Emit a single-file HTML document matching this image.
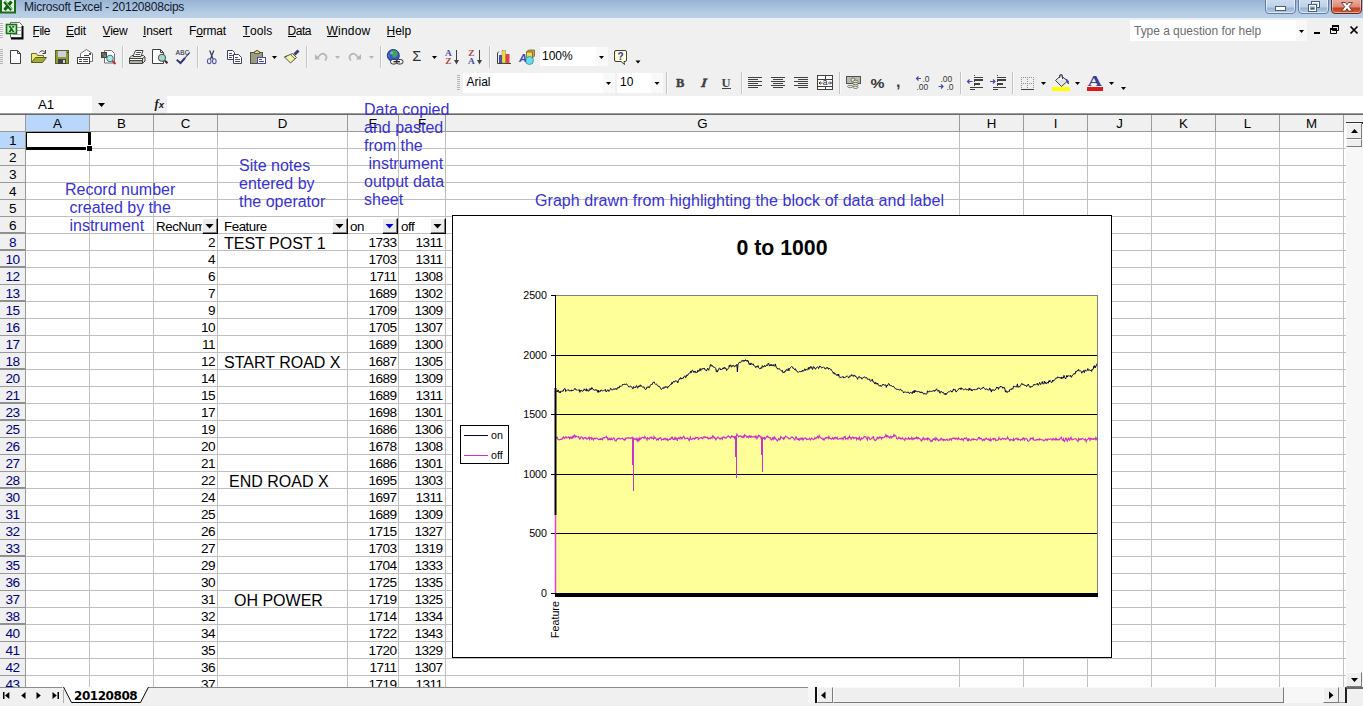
<!DOCTYPE html>
<html lang="en"><head><meta charset="utf-8"><title>Microsoft Excel - 20120808cips</title>
<style>
html,body{margin:0;padding:0}
body{width:1363px;height:706px;overflow:hidden;background:#f0f0f0;position:relative;font-family:"Liberation Sans",sans-serif;color:#000}
div,span,svg{position:absolute;box-sizing:border-box}
.t{white-space:pre;line-height:1}

#title{left:0;top:0;width:1363px;height:22px;background:linear-gradient(#99b3d3 0,#a9c2de 8px,#b5cde6 13px,#bccfe0 17.500px,#e8f1f9 17.700px,#edf1f5 20px,#f0f0f0 22px)}
.menu{font-size:12px;top:25px;color:#000}
.menu u{text-decoration:none;display:inline-block;position:static;height:11px;line-height:12px;border-bottom:1px solid #000}
.hd{background:#f0f0f0;font-size:13.3px;text-align:center;line-height:17px}
.ch{top:115px;height:16px;border-right:1px solid #9a9a9a;}
.rh{left:0;width:26px;letter-spacing:-.5px;height:17px;border-bottom:1px solid #9a9a9a;line-height:18px;font-size:13.6px;text-align:center}
.rb{color:#00007f}
.num{font-size:13.6px;letter-spacing:-.55px;text-align:right;line-height:18px;height:17px}
.ft{font-size:16px;line-height:19px;height:17px;white-space:pre}
.note{color:#3832d2;font-size:16px;line-height:18px;white-space:pre}
.vb{background:#efefef;border:1px solid;border-color:#fbfbfb #7c7c7c #7c7c7c #fbfbfb}
.fb{background:#ececec;border:1px solid;border-color:#fff #000 #000 #fff;box-shadow:inset -1px -1px 0 #808080}
</style></head><body>
<div id="title"></div>
<svg style="left:0;top:0" width="16" height="14" viewBox="0 0 16 14"><rect x="0" y="0" width="16" height="13.500" fill="#1b6b1b"/><rect x="2" y="0" width="12" height="11.500" fill="#e6f7e6"/><path d="M4.500 1.500 L11.500 10 M11.500 1.500 L4.500 10" stroke="#0d640d" stroke-width="3.200" fill="none"/><path d="M4.800 .500 L12.300 9.800" stroke="#e6f7e6" stroke-width=".800" fill="none"/></svg>
<div class="t" style="left:24px;top:1px;font-size:12px;letter-spacing:-.22px;color:#10182c">Microsoft Excel - 20120808cips</div>
<div style="left:1265px;top:-2px;width:31px;height:16px;border:1px solid #5f7ea8;border-radius:0 0 4px 4px;background:linear-gradient(#cfddf0 0,#bed1e9 8px,#9ab4d5 9px,#a8c0de 12px,#bfd2ea 15px);box-shadow:inset 0 0 0 1px rgba(255,255,255,.55)"></div>
<div style="left:1298px;top:-2px;width:31px;height:16px;border:1px solid #5f7ea8;border-radius:0 0 4px 4px;background:linear-gradient(#cfddf0 0,#bed1e9 8px,#9ab4d5 9px,#a8c0de 12px,#bfd2ea 15px);box-shadow:inset 0 0 0 1px rgba(255,255,255,.55)"></div>
<div style="left:1331px;top:-2px;width:31px;height:16px;border:1px solid #6b2a22;border-radius:0 0 4px 4px;background:linear-gradient(#eab3a6 0,#dc8875 8px,#c23f24 9px,#cd5030 12px,#de8458 15px);box-shadow:inset 0 0 0 1px rgba(255,255,255,.4)"></div>
<svg style="left:1265px;top:0" width="98" height="15" viewBox="0 0 98 15">
<rect x="10.5" y="6.5" width="10" height="4" fill="#fff" stroke="#4a5d78" stroke-width="1"/>
<rect x="46.500" y="1.500" width="8" height="6" fill="none" stroke="#4a5d78" stroke-width="1"/><rect x="47.5" y="2.500" width="6" height="4" fill="none" stroke="#fff" stroke-width="1"/>
<rect x="43.500" y="4.500" width="8" height="7" fill="#b6cbe6" stroke="#4a5d78" stroke-width="1"/><rect x="44.5" y="5.500" width="6" height="5" fill="none" stroke="#fff" stroke-width="1"/><rect x="45.5" y="7.5" width="4" height="2" fill="#4a5d78" stroke="none"/>
<path d="M76.500 2.500 L80.500 2.500 L82 4.800 L83.500 2.500 L87.500 2.500 L84.200 6.700 L87.500 11 L83.500 11 L82 8.700 L80.500 11 L76.500 11 L79.800 6.700 Z" fill="#fff" stroke="#6a3028" stroke-width=".9"/>
</svg>
<div style="left:0;top:23px;width:3px;height:15px;background:repeating-linear-gradient(#b8b8b8 0,#b8b8b8 1px,#f8f8f8 1px,#f8f8f8 2px)"></div>
<svg style="left:5px;top:21px" width="19" height="19" viewBox="0 0 19 19">
<path d="M5.500 1.500 L14.500 1.500 L17.500 4.500 L17.500 16.500 L5.500 16.500 Z" fill="#fff" stroke="#707070" stroke-width="1"/><path d="M12 6.500 h4 M12 9.500 h4 M8 13.500 h8" stroke="#b0b0b0" fill="none"/>
<path d="M17.500 5 L17.500 17.500 L6 17.500" fill="none" stroke="#000" stroke-width="2"/>
<rect x="1.5" y="3.500" width="10" height="9" fill="#c4ecc4" stroke="#176f17" stroke-width="1.6"/>
<path d="M3.500 5 L5.500 5 L9.500 11 L7.500 11 Z M7.600 5 L9.500 5 L8 7.200 L7 5.800 Z M3.500 11 L5.800 7.600 L6.800 9 L5.500 11 Z" fill="#0f6a0f"/>
</svg>
<div class="t menu" style="left:32.5px;letter-spacing:-0.45px"><u>F</u>ile</div>
<div class="t menu" style="left:66px;letter-spacing:-0.17px"><u>E</u>dit</div>
<div class="t menu" style="left:102.5px;letter-spacing:-0.3px"><u>V</u>iew</div>
<div class="t menu" style="left:143px;letter-spacing:-0.17px"><u>I</u>nsert</div>
<div class="t menu" style="left:189px;letter-spacing:-0.17px">F<u>o</u>rmat</div>
<div class="t menu" style="left:242.5px;letter-spacing:0.1px"><u>T</u>ools</div>
<div class="t menu" style="left:287.5px;letter-spacing:-0.46px"><u>D</u>ata</div>
<div class="t menu" style="left:326.5px;letter-spacing:0.2px"><u>W</u>indow</div>
<div class="t menu" style="left:386.5px;letter-spacing:0px"><u>H</u>elp</div>
<div style="left:1130px;top:20px;width:166px;height:21px;background:#fff"></div><div style="left:1296px;top:20px;width:11px;height:21px;background:#f8f8f8"></div>
<div class="t" style="left:1134px;top:25px;font-size:12px;letter-spacing:-.04px;color:#6d6d6d">Type a question for help</div>
<svg style="left:1296px;top:20px" width="67" height="21" viewBox="0 0 67 21"><path d="M3 10 L8 10 L5.500 13 Z" fill="#000"/><rect x="18" y="12" width="6" height="2" fill="#000"/><path d="M36.500 5.500 h6 v5 h-6 z M34.500 8.500 h6 v5 h-6 z" fill="#f0f0f0" stroke="#000" stroke-width="1"/><path d="M36 6 h7 M34 9 h7" stroke="#000" stroke-width="2"/><path d="M54.500 6.500 L61.500 13.500 M61.500 6.500 L54.500 13.500" stroke="#000" stroke-width="1.700"/></svg>
<svg style="left:0;top:44px" width="660" height="26" viewBox="0 44 660 26" font-family="Liberation Sans, sans-serif">
<rect x="0" y="49" width="3" height="1" fill="#b4b4b4"/><rect x="0" y="51" width="3" height="1" fill="#b4b4b4"/><rect x="0" y="53" width="3" height="1" fill="#b4b4b4"/><rect x="0" y="55" width="3" height="1" fill="#b4b4b4"/><rect x="0" y="57" width="3" height="1" fill="#b4b4b4"/><rect x="0" y="59" width="3" height="1" fill="#b4b4b4"/><rect x="0" y="61" width="3" height="1" fill="#b4b4b4"/><rect x="0" y="63" width="3" height="1" fill="#b4b4b4"/><path d="M10.5 50.5 H17.5 L20.5 53.5 V63.5 H10.5 Z" fill="#fff" stroke="#404040"/><path d="M17.5 50.5 V53.5 H20.5" fill="none" stroke="#404040"/>
<path d="M31.5 62.5 V53.5 H36.5 L37.5 55.5 H43.5 V57.5" fill="#f3ea86" stroke="#6b6b2a"/><path d="M31.5 62.5 L35.5 57.5 H46.5 L42.5 62.5 Z" fill="#a3ab3c" stroke="#5a5f20"/><path d="M39.5 52.5 Q42 49 45 52.5 M45.5 50 V53.5 H42.5" fill="none" stroke="#404040"/>
<rect x="55.5" y="50.5" width="13" height="13" fill="#8f9a3c" stroke="#5a6420"/><rect x="58" y="51" width="8" height="6" fill="#cfcfe0"/><rect x="58" y="59" width="8" height="5" fill="#404040"/><rect x="63" y="60" width="2" height="3" fill="#d8d8d8"/><rect x="67" y="52" width="1" height="1" fill="#303030"/>
<path d="M80.5 57 V53.5 L86.5 49.5 L92.5 53.5 V61.5 H89.5" fill="#fff" stroke="#707070"/><path d="M84 55.5 h5" stroke="#404040" fill="none"/><rect x="89" y="53" width="2" height="2" fill="#505050"/><rect x="77.5" y="57.5" width="12" height="6" fill="#fff" stroke="#404040"/><path d="M79 59.5 h3 M79 61.500 h3 M83 59.5 h5 M83 61.5 h5" stroke="#505050" fill="none"/>
<path d="M104.5 50.5 h7 l3 3 v9.5 h-10 z" fill="#fff" stroke="#707070"/><rect x="101.5" y="52.5" width="5" height="5" fill="#606060" stroke="#404040"/><rect x="102" y="53" width="2" height="2" fill="#c05050"/><rect x="104" y="55" width="2" height="2" fill="#50a050"/><circle cx="110" cy="58.5" r="3.300" fill="#a8e4e4" stroke="#407080"/><path d="M112.5 61 L115.5 64" stroke="#c03030" stroke-width="2" fill="none"/>
<rect x="122" y="46" width="1" height="22" fill="#c4c4c4"/><rect x="123" y="46" width="1" height="22" fill="#fafafa"/><path d="M129.500 58 L132 55.500 H143.500 L145 57 V61 L142.500 63.500 H129.500 Z" fill="#e6e6e0" stroke="#404040"/><path d="M133 56.500 L135.500 50.500 H143 L141 56.500 Z" fill="#fff" stroke="#404040"/><path d="M136.300 52.500 h4.700 M135.500 54.500 h4.700" stroke="#505050" fill="none"/><rect x="130" y="58.500" width="12" height="1.500" fill="#fff"/><rect x="130" y="61" width="12" height="2" fill="#aeaea6"/><path d="M129.500 58.500 H142.500 M130 60.500 H142.500 M142.500 58 V63.500 M142.500 58.500 L145 56.500" stroke="#404040" fill="none"/>
<path d="M152.500 49.500 h8 l3 3 v11 h-11 z" fill="#fff" stroke="#404040"/><path d="M160.500 49.500 v3 h3" fill="none" stroke="#404040"/><circle cx="162" cy="57.800" r="3.600" fill="#a4d6ce" stroke="#404848"/><path d="M165 60.800 L167.500 63.300" stroke="#303030" stroke-width="2.200" fill="none"/>
<text x="175.800" y="54.800" font-size="6.300" fill="#30304c" letter-spacing=".300" stroke="#30304c" stroke-width=".150">ABC</text><path d="M176.700 59.700 L180.500 63 L185 58" fill="none" stroke="#363678" stroke-width="2"/><path d="M184.500 58.500 L189.800 52.300" fill="none" stroke="#363678" stroke-width="1.100"/>
<rect x="197" y="46" width="1" height="22" fill="#c4c4c4"/><rect x="198" y="46" width="1" height="22" fill="#fafafa"/><path d="M209.700 50.500 L213 59 M213.800 50.500 L210.500 59" stroke="#404060" stroke-width="1.300" fill="none"/><ellipse cx="209.200" cy="61.200" rx="1.800" ry="2.400" fill="none" stroke="#5858a8" stroke-width="1.100"/><ellipse cx="214.300" cy="61.200" rx="1.800" ry="2.400" fill="none" stroke="#5858a8" stroke-width="1.100"/>
<path d="M227.500 50.500 h5 l2 2 v7 h-7 z" fill="#fff" stroke="#404060"/><path d="M229 53.500 h3 M229 55.500 h4 M229 57.500 h3" stroke="#505070" fill="none"/><path d="M233.500 54.500 h5 l3 3 v6 h-8 z" fill="#fff" stroke="#404060"/><path d="M235 57.500 h3 M235 59.500 h5 M235 61.500 h5" stroke="#505070" fill="none"/>
<rect x="250.500" y="52.500" width="12" height="11" fill="#9c9c84" stroke="#505040"/><path d="M254.500 53.500 v-2 h1.500 v-1 h2 v1 h1.500 v2 z" fill="#e4dc90" stroke="#606030"/><rect x="257.500" y="57.500" width="8" height="6" fill="#fff" stroke="#4a4aa0"/><path d="M259 59.500 h3 M259 61.500 h5" stroke="#4a4aa0" fill="none"/>
<path d="M272 56 h5 l-2.5 3 z" fill="#000"/><path d="M298.500 50.500 L294.500 54.500" stroke="#3c3c78" stroke-width="3" fill="none"/><path d="M292.500 53.500 L296.500 57.500 L290.500 63 L284.500 57 Z" fill="#f4f4a8" stroke="#505050"/><path d="M291 55 L295 59" stroke="#707070" fill="none"/><path d="M284.500 57 L287 56" stroke="#505050" fill="none"/>
<rect x="306" y="46" width="1" height="22" fill="#c4c4c4"/><rect x="307" y="46" width="1" height="22" fill="#fafafa"/><path d="M318 57.500 Q322 51 326 55.500 Q327.500 58 325 60.500" fill="none" stroke="#b4b4b4" stroke-width="1.600"/><path d="M315 54 L320 59.500 L315 59.500 Z" fill="#b4b4b4"/><path d="M335 56 h5 l-2.5 3 z" fill="#b4b4b4"/><path d="M358 57.500 Q354 51 350 55.500 Q348.500 58 351 60.500" fill="none" stroke="#b4b4b4" stroke-width="1.600"/><path d="M361 54 L356 59.500 L361 59.500 Z" fill="#b4b4b4"/><path d="M369 56 h5 l-2.5 3 z" fill="#b4b4b4"/>
<rect x="380" y="46" width="1" height="22" fill="#c4c4c4"/><rect x="381" y="46" width="1" height="22" fill="#fafafa"/><circle cx="393.300" cy="55.500" r="6" fill="#3456d4" stroke="#1f3694"/><path d="M390.500 51 Q394.500 49.500 397 51.500 Q398.500 54.500 396.500 56.500 Q393.500 58.500 392 56 Q394 53.500 390.500 51 Z" fill="#3fa84c"/><path d="M388 54 Q390 55 389.500 58 Q388 57 388 54 Z" fill="#3fa84c"/><circle cx="391.500" cy="53" r="1.600" fill="#a8c0f4" opacity=".700"/><rect x="390.500" y="59.500" width="6.500" height="4.500" rx="2.200" fill="#f4f4f4" stroke="#303030"/><rect x="396.500" y="59.500" width="6.500" height="4.500" rx="2.200" fill="#f4f4f4" stroke="#303030"/><path d="M393.500 61.700 h6.500" stroke="#303030" stroke-width="1.400" fill="none"/>
<text x="412.200" y="61.200" font-size="14.500" fill="#303030">Σ</text><path d="M432 56 h5 l-2.5 3 z" fill="#000"/><text x="445" y="55.900" font-size="8.800" textLength="6.800" lengthAdjust="spacingAndGlyphs" font-weight="bold" fill="#4a4aa8" font-family="Liberation Serif, serif">A</text><text x="445.300" y="63.800" font-size="8.800" textLength="6.300" lengthAdjust="spacingAndGlyphs" font-weight="bold" fill="#a84848" font-family="Liberation Serif, serif">Z</text><path d="M456.500 50 V62" stroke="#404040" fill="none"/><path d="M454 60 h5 l-2.500 4.500 z" fill="#404040"/><text x="468.300" y="55.900" font-size="8.800" textLength="6.300" lengthAdjust="spacingAndGlyphs" font-weight="bold" fill="#a84848" font-family="Liberation Serif, serif">Z</text><text x="468" y="63.800" font-size="8.800" textLength="6.800" lengthAdjust="spacingAndGlyphs" font-weight="bold" fill="#4a4aa8" font-family="Liberation Serif, serif">A</text><path d="M479.500 50 V62" stroke="#404040" fill="none"/><path d="M477 60 h5 l-2.500 4.500 z" fill="#404040"/>
<rect x="489" y="46" width="1" height="22" fill="#c4c4c4"/><rect x="490" y="46" width="1" height="22" fill="#fafafa"/><path d="M499 51.500 L497.500 53 V63.500 H511" fill="none" stroke="#404040"/><rect x="499" y="55" width="3" height="8" fill="#4450b8"/><rect x="502" y="50.500" width="3.500" height="12.500" fill="#f2e040" stroke="#8a8030" stroke-width=".500"/><rect x="505.500" y="54" width="4" height="9" fill="#d84848"/>
<path d="M526.500 52 l2 -2 h6 v6 l-2 2 z" fill="#c8a838" stroke="#605020" stroke-width=".700"/><rect x="526.500" y="52" width="6" height="6" fill="#f0d850" stroke="#605020" stroke-width=".700"/><circle cx="529.500" cy="60.500" r="4" fill="#68dcec" stroke="#2a8090" stroke-width=".700"/><text x="519" y="62" font-size="11" font-weight="bold" font-style="italic" fill="#3a48b0">A</text>
<rect x="540" y="47" width="56" height="19" fill="#fff"/><rect x="596" y="47" width="12" height="19" fill="#f9f9f9"/><text x="542" y="60" font-size="12" fill="#000">100%</text><path d="M599 56 h5 l-2.5 3 z" fill="#000"/><path d="M616 50.500 h9 q1.500 0 1.500 1.500 v8 q0 1.500 -1.500 1.500 h-1 l.500 3 l-3.500 -3 h-5 q-1.500 0 -1.500 -1.500 v-8 q0 -1.500 1.500 -1.500 z" fill="#ffffd8" stroke="#404040"/><text x="617.500" y="60" font-size="10" font-weight="bold" fill="#3434a0">?</text><path d="M635.500 60.500 h5 l-2.500 3 z" fill="#000"/>
</svg>
<svg style="left:456px;top:70px" width="680" height="26" viewBox="456 70 680 26" font-family="Liberation Sans, sans-serif">
<rect x="457" y="75" width="3" height="1" fill="#b4b4b4"/><rect x="457" y="77" width="3" height="1" fill="#b4b4b4"/><rect x="457" y="79" width="3" height="1" fill="#b4b4b4"/><rect x="457" y="81" width="3" height="1" fill="#b4b4b4"/><rect x="457" y="83" width="3" height="1" fill="#b4b4b4"/><rect x="457" y="85" width="3" height="1" fill="#b4b4b4"/><rect x="457" y="87" width="3" height="1" fill="#b4b4b4"/><rect x="457" y="89" width="3" height="1" fill="#b4b4b4"/><rect x="463" y="73" width="140" height="20" fill="#fff"/><rect x="603" y="73" width="12" height="20" fill="#f9f9f9"/><text x="466.500" y="86" font-size="12">Arial</text><path d="M606 82 h5 l-2.5 3 z" fill="#000"/><rect x="617" y="73" width="34" height="20" fill="#fff"/><rect x="651" y="73" width="12" height="20" fill="#f9f9f9"/><text x="620" y="86" font-size="12">10</text><path d="M654.5 82 h5 l-2.5 3 z" fill="#000"/>
<rect x="666" y="72" width="1" height="22" fill="#c4c4c4"/><rect x="667" y="72" width="1" height="22" fill="#fafafa"/><text x="676" y="87" font-size="12.500" font-weight="bold" fill="#404040" font-family="Liberation Serif, serif" stroke="#404040" stroke-width=".400">B</text><text x="699.500" y="87" font-size="12.500" font-weight="bold" font-style="italic" fill="#404040" font-family="Liberation Serif, serif" stroke="#404040" stroke-width=".700" transform="translate(1.500 0) skewX(-8)" style="transform-origin:703px 87px">I</text><text x="721.500" y="87" font-size="12.500" font-weight="bold" fill="#404040" font-family="Liberation Serif, serif">U</text><rect x="722" y="88" width="9" height="1" fill="#404040"/>
<rect x="741" y="72" width="1" height="22" fill="#c4c4c4"/><rect x="742" y="72" width="1" height="22" fill="#fafafa"/><rect x="748" y="77" width="14" height="1" fill="#404040"/><rect x="748" y="79" width="10" height="1" fill="#404040"/><rect x="748" y="81" width="14" height="1" fill="#404040"/><rect x="748" y="83" width="10" height="1" fill="#404040"/><rect x="748" y="85" width="14" height="1" fill="#404040"/><rect x="748" y="87" width="10" height="1" fill="#404040"/><rect x="771" y="77" width="14" height="1" fill="#404040"/><rect x="773" y="79" width="10" height="1" fill="#404040"/><rect x="771" y="81" width="14" height="1" fill="#404040"/><rect x="773" y="83" width="10" height="1" fill="#404040"/><rect x="771" y="85" width="14" height="1" fill="#404040"/><rect x="773" y="87" width="10" height="1" fill="#404040"/><rect x="794" y="77" width="14" height="1" fill="#404040"/><rect x="798" y="79" width="10" height="1" fill="#404040"/><rect x="794" y="81" width="14" height="1" fill="#404040"/><rect x="798" y="83" width="10" height="1" fill="#404040"/><rect x="794" y="85" width="14" height="1" fill="#404040"/><rect x="798" y="87" width="10" height="1" fill="#404040"/><rect x="817.500" y="75.500" width="15" height="14" fill="#fff" stroke="#404040"/><path d="M817.500 79.500 h15 M817.500 86.500 h15 M825.500 75.500 v4 M825.500 86.500 v3" stroke="#404040" fill="none"/><text x="822.700" y="85.200" font-size="8.500" fill="#202020">a</text><path d="M819 83 h3.500 M828 83 h3.500 M820.500 81.500 l-1.500 1.500 l1.500 1.500 M830 81.500 l1.500 1.500 l-1.500 1.500" stroke="#404040" fill="none"/>
<rect x="839" y="72" width="1" height="22" fill="#c4c4c4"/><rect x="840" y="72" width="1" height="22" fill="#fafafa"/><rect x="846.500" y="76.500" width="14" height="7" fill="#b8bca8" stroke="#505050"/><circle cx="853" cy="80" r="2" fill="#e8e8d8" stroke="#505050" stroke-width=".700"/><ellipse cx="855.500" cy="81.500" rx="2.500" ry="1.200" fill="#f0f0c8" stroke="#505050" stroke-width=".700"/><ellipse cx="855.500" cy="83.500" rx="2.500" ry="1.200" fill="#f0f0c8" stroke="#505050" stroke-width=".700"/><ellipse cx="855.500" cy="85.500" rx="2.500" ry="1.200" fill="#f0f0c8" stroke="#505050" stroke-width=".700"/><ellipse cx="850" cy="86.500" rx="2.500" ry="1.200" fill="#f0f0f0" stroke="#505050" stroke-width=".700"/><ellipse cx="855.500" cy="87.300" rx="2.500" ry="1.200" fill="#f0f0c8" stroke="#505050" stroke-width=".700"/><text x="870.500" y="88" font-size="13.500" font-weight="bold" fill="#383838" textLength="14" lengthAdjust="spacingAndGlyphs">%</text><text x="896" y="87" font-size="16" font-weight="bold" fill="#404040">,</text>
<text x="922.500" y="81.500" font-size="8.500" fill="#383838">.0</text><text x="916.500" y="89.500" font-size="8.500" fill="#383838">.00</text><path d="M916.500 78.500 h4.500 M918.500 76.500 l-2 2 l2 2" stroke="#4848a8" fill="none" stroke-width="1.200"/><text x="940.500" y="81.500" font-size="8.500" fill="#383838">.00</text><text x="946.500" y="89.500" font-size="8.500" fill="#383838">.0</text><path d="M938.500 86.500 h4.500 M941 84.500 l2 2 l-2 2" stroke="#4848a8" fill="none" stroke-width="1.200"/>
<rect x="960" y="72" width="1" height="22" fill="#c4c4c4"/><rect x="961" y="72" width="1" height="22" fill="#fafafa"/><rect x="974" y="77" width="9" height="1" fill="#404040"/><rect x="974" y="79" width="9" height="2" fill="#404040"/><rect x="974" y="83" width="6" height="2" fill="#404040"/><rect x="970" y="87" width="13" height="1" fill="#404040"/><rect x="970" y="89" width="4" height="1" fill="#404040"/><path d="M974.5 75 v15" stroke="#404040" stroke-dasharray="1 1" fill="none"/><path d="M967.5 81.500 h5 M969.5 79.500 l-2 2 l2 2" stroke="#4848a8" fill="none" stroke-width="1.200"/><rect x="997" y="77" width="9" height="1" fill="#404040"/><rect x="997" y="79" width="9" height="2" fill="#404040"/><rect x="997" y="83" width="6" height="2" fill="#404040"/><rect x="993" y="87" width="13" height="1" fill="#404040"/><rect x="993" y="89" width="4" height="1" fill="#404040"/><path d="M997.5 75 v15" stroke="#404040" stroke-dasharray="1 1" fill="none"/><path d="M990 81.500 h5 M993 79.500 l2 2 l-2 2" stroke="#4848a8" fill="none" stroke-width="1.200"/>
<rect x="1012" y="72" width="1" height="22" fill="#c4c4c4"/><rect x="1013" y="72" width="1" height="22" fill="#fafafa"/><path d="M1021.500 77 v12 M1027.500 77 v12 M1033.500 77 v12 M1021 77.500 h13 M1021 83.500 h13" stroke="#909090" stroke-dasharray="1 1" fill="none"/><rect x="1021" y="89" width="13" height="1" fill="#404040"/><path d="M1041 82 h5 l-2.5 3 z" fill="#000"/><rect x="1052" y="87" width="18" height="4" fill="#ffff00"/><path d="M1055.500 80.500 L1061 75.500 L1067.500 81 L1061.500 86.500 Z" fill="#e4e4e4" stroke="#404040"/><path d="M1057.500 80.500 L1061 77.500 L1063 79 Z" fill="#fff"/><path d="M1059.500 78 v-2 q0 -1.500 1.500 -1.500 q1.500 0 1.500 1.500 v3" fill="none" stroke="#404070"/><path d="M1066 79 q3 1 2.500 5 q-2 -2 -2.500 -5 z" fill="#4848a8" stroke="#4848a8"/><path d="M1075 82 h5 l-2.5 3 z" fill="#000"/><rect x="1087" y="87" width="16" height="4" fill="#e01818"/><text x="1087.500" y="85.500" font-size="15.500" font-weight="bold" fill="#3c3c90" font-family="Liberation Serif, serif" textLength="14.500" lengthAdjust="spacingAndGlyphs">A</text><path d="M1109 82 h5 l-2.5 3 z" fill="#000"/><path d="M1121 87 h5 l-2.500 3 z" fill="#000"/>
</svg>
<div style="left:0;top:96px;width:1363px;height:18px;background:#fff;border-bottom:1px solid #9c9c9c"></div>
<div style="left:92px;top:96px;width:75px;height:17px;background:#f0f0f0"></div>
<div class="t" style="left:38px;top:98px;font-size:13.3px">A1</div>
<svg style="left:96px;top:101px" width="12" height="8" viewBox="0 0 12 8"><path d="M2 2 L9 2 L5.500 6 Z" fill="#000"/></svg>
<div class="t" style="left:154.500px;top:98px;font-size:12.500px;font-weight:bold;font-style:italic;font-family:'Liberation Serif',serif;color:#1a1a1a">f<span style="position:static;font-size:9.500px;font-weight:bold;font-family:'Liberation Sans',sans-serif;letter-spacing:0">x</span></div>
<div id="grid" style="left:0;top:114px;width:1363px;height:573px;overflow:hidden;background:#fff">
<div style="left:89px;top:17px;width:1px;height:560px;background:#c0c0c0"></div><div style="left:153px;top:17px;width:1px;height:560px;background:#c0c0c0"></div><div style="left:217px;top:17px;width:1px;height:560px;background:#c0c0c0"></div><div style="left:347px;top:17px;width:1px;height:560px;background:#c0c0c0"></div><div style="left:398px;top:17px;width:1px;height:560px;background:#c0c0c0"></div><div style="left:445px;top:17px;width:1px;height:560px;background:#c0c0c0"></div><div style="left:959px;top:17px;width:1px;height:560px;background:#c0c0c0"></div><div style="left:1023px;top:17px;width:1px;height:560px;background:#c0c0c0"></div><div style="left:1087px;top:17px;width:1px;height:560px;background:#c0c0c0"></div><div style="left:1151px;top:17px;width:1px;height:560px;background:#c0c0c0"></div><div style="left:1215px;top:17px;width:1px;height:560px;background:#c0c0c0"></div><div style="left:1279px;top:17px;width:1px;height:560px;background:#c0c0c0"></div><div style="left:1343px;top:17px;width:1px;height:560px;background:#c0c0c0"></div>
<div style="left:26px;top:34px;width:1326px;height:1px;background:#c0c0c0"></div><div style="left:26px;top:51px;width:1326px;height:1px;background:#c0c0c0"></div><div style="left:26px;top:68px;width:1326px;height:1px;background:#c0c0c0"></div><div style="left:26px;top:85px;width:1326px;height:1px;background:#c0c0c0"></div><div style="left:26px;top:102px;width:1326px;height:1px;background:#c0c0c0"></div><div style="left:26px;top:119px;width:1326px;height:1px;background:#c0c0c0"></div><div style="left:26px;top:136px;width:1326px;height:1px;background:#c0c0c0"></div><div style="left:26px;top:153px;width:1326px;height:1px;background:#c0c0c0"></div><div style="left:26px;top:170px;width:1326px;height:1px;background:#c0c0c0"></div><div style="left:26px;top:187px;width:1326px;height:1px;background:#c0c0c0"></div><div style="left:26px;top:204px;width:1326px;height:1px;background:#c0c0c0"></div><div style="left:26px;top:221px;width:1326px;height:1px;background:#c0c0c0"></div><div style="left:26px;top:238px;width:1326px;height:1px;background:#c0c0c0"></div><div style="left:26px;top:255px;width:1326px;height:1px;background:#c0c0c0"></div><div style="left:26px;top:272px;width:1326px;height:1px;background:#c0c0c0"></div><div style="left:26px;top:289px;width:1326px;height:1px;background:#c0c0c0"></div><div style="left:26px;top:306px;width:1326px;height:1px;background:#c0c0c0"></div><div style="left:26px;top:323px;width:1326px;height:1px;background:#c0c0c0"></div><div style="left:26px;top:340px;width:1326px;height:1px;background:#c0c0c0"></div><div style="left:26px;top:357px;width:1326px;height:1px;background:#c0c0c0"></div><div style="left:26px;top:374px;width:1326px;height:1px;background:#c0c0c0"></div><div style="left:26px;top:391px;width:1326px;height:1px;background:#c0c0c0"></div><div style="left:26px;top:408px;width:1326px;height:1px;background:#c0c0c0"></div><div style="left:26px;top:425px;width:1326px;height:1px;background:#c0c0c0"></div><div style="left:26px;top:442px;width:1326px;height:1px;background:#c0c0c0"></div><div style="left:26px;top:459px;width:1326px;height:1px;background:#c0c0c0"></div><div style="left:26px;top:476px;width:1326px;height:1px;background:#c0c0c0"></div><div style="left:26px;top:493px;width:1326px;height:1px;background:#c0c0c0"></div><div style="left:26px;top:510px;width:1326px;height:1px;background:#c0c0c0"></div><div style="left:26px;top:527px;width:1326px;height:1px;background:#c0c0c0"></div><div style="left:26px;top:544px;width:1326px;height:1px;background:#c0c0c0"></div><div style="left:26px;top:561px;width:1326px;height:1px;background:#c0c0c0"></div><div style="left:26px;top:578px;width:1326px;height:1px;background:#c0c0c0"></div><div style="left:26px;top:595px;width:1326px;height:1px;background:#c0c0c0"></div>
<div style="left:0;top:0;width:1363px;height:1px;background:#6a6a6a"></div><div style="left:0;top:1px;width:1344px;height:17px;background:#f0f0f0;border-bottom:1px solid #9a9a9a"></div>
<div style="left:0;top:1px;width:26px;height:17px;border-right:1px solid #9a9a9a;border-bottom:1px solid #9a9a9a;background:#f0f0f0"></div>
<div class="hd" style="left:26px;top:1px;width:64px;height:17px;border-right:1px solid #9a9a9a;border-bottom:1px solid #9a9a9a;background:#b9d7fb">A</div><div class="hd" style="left:90px;top:1px;width:64px;height:17px;border-right:1px solid #9a9a9a;border-bottom:1px solid #9a9a9a;background:transparent">B</div><div class="hd" style="left:154px;top:1px;width:64px;height:17px;border-right:1px solid #9a9a9a;border-bottom:1px solid #9a9a9a;background:transparent">C</div><div class="hd" style="left:218px;top:1px;width:130px;height:17px;border-right:1px solid #9a9a9a;border-bottom:1px solid #9a9a9a;background:transparent">D</div><div class="hd" style="left:348px;top:1px;width:51px;height:17px;border-right:1px solid #9a9a9a;border-bottom:1px solid #9a9a9a;background:transparent">E</div><div class="hd" style="left:399px;top:1px;width:47px;height:17px;border-right:1px solid #9a9a9a;border-bottom:1px solid #9a9a9a;background:transparent">F</div><div class="hd" style="left:446px;top:1px;width:514px;height:17px;border-right:1px solid #9a9a9a;border-bottom:1px solid #9a9a9a;background:transparent">G</div><div class="hd" style="left:960px;top:1px;width:64px;height:17px;border-right:1px solid #9a9a9a;border-bottom:1px solid #9a9a9a;background:transparent">H</div><div class="hd" style="left:1024px;top:1px;width:64px;height:17px;border-right:1px solid #9a9a9a;border-bottom:1px solid #9a9a9a;background:transparent">I</div><div class="hd" style="left:1088px;top:1px;width:64px;height:17px;border-right:1px solid #9a9a9a;border-bottom:1px solid #9a9a9a;background:transparent">J</div><div class="hd" style="left:1152px;top:1px;width:64px;height:17px;border-right:1px solid #9a9a9a;border-bottom:1px solid #9a9a9a;background:transparent">K</div><div class="hd" style="left:1216px;top:1px;width:64px;height:17px;border-right:1px solid #9a9a9a;border-bottom:1px solid #9a9a9a;background:transparent">L</div><div class="hd" style="left:1280px;top:1px;width:64px;height:17px;border-right:1px solid #9a9a9a;border-bottom:1px solid #9a9a9a;background:transparent">M</div>
<div class="rh" style="top:18px;background:#b9d7fb;border-right:1px solid #9a9a9a">1</div><div class="rh" style="top:35px;background:#f0f0f0;border-right:1px solid #9a9a9a">2</div><div class="rh" style="top:52px;background:#f0f0f0;border-right:1px solid #9a9a9a">3</div><div class="rh" style="top:69px;background:#f0f0f0;border-right:1px solid #9a9a9a">4</div><div class="rh" style="top:86px;background:#f0f0f0;border-right:1px solid #9a9a9a">5</div><div class="rh" style="top:103px;background:#f0f0f0;border-right:1px solid #9a9a9a;border-bottom:2px solid #909090">6</div><div class="rh rb" style="top:120px;background:#f0f0f0;border-right:1px solid #9a9a9a;border-bottom:2px solid #909090">8</div><div class="rh rb" style="top:137px;background:#f0f0f0;border-right:1px solid #9a9a9a;border-bottom:2px solid #909090">10</div><div class="rh rb" style="top:154px;background:#f0f0f0;border-right:1px solid #9a9a9a">12</div><div class="rh rb" style="top:171px;background:#f0f0f0;border-right:1px solid #9a9a9a;border-bottom:2px solid #909090">13</div><div class="rh rb" style="top:188px;background:#f0f0f0;border-right:1px solid #9a9a9a">15</div><div class="rh rb" style="top:205px;background:#f0f0f0;border-right:1px solid #9a9a9a">16</div><div class="rh rb" style="top:222px;background:#f0f0f0;border-right:1px solid #9a9a9a">17</div><div class="rh rb" style="top:239px;background:#f0f0f0;border-right:1px solid #9a9a9a;border-bottom:2px solid #909090">18</div><div class="rh rb" style="top:256px;background:#f0f0f0;border-right:1px solid #9a9a9a">20</div><div class="rh rb" style="top:273px;background:#f0f0f0;border-right:1px solid #9a9a9a;border-bottom:2px solid #909090">21</div><div class="rh rb" style="top:290px;background:#f0f0f0;border-right:1px solid #9a9a9a;border-bottom:2px solid #909090">23</div><div class="rh rb" style="top:307px;background:#f0f0f0;border-right:1px solid #9a9a9a">25</div><div class="rh rb" style="top:324px;background:#f0f0f0;border-right:1px solid #9a9a9a">26</div><div class="rh rb" style="top:341px;background:#f0f0f0;border-right:1px solid #9a9a9a">27</div><div class="rh rb" style="top:358px;background:#f0f0f0;border-right:1px solid #9a9a9a;border-bottom:2px solid #909090">28</div><div class="rh rb" style="top:375px;background:#f0f0f0;border-right:1px solid #9a9a9a">30</div><div class="rh rb" style="top:392px;background:#f0f0f0;border-right:1px solid #9a9a9a">31</div><div class="rh rb" style="top:409px;background:#f0f0f0;border-right:1px solid #9a9a9a">32</div><div class="rh rb" style="top:426px;background:#f0f0f0;border-right:1px solid #9a9a9a;border-bottom:2px solid #909090">33</div><div class="rh rb" style="top:443px;background:#f0f0f0;border-right:1px solid #9a9a9a">35</div><div class="rh rb" style="top:460px;background:#f0f0f0;border-right:1px solid #9a9a9a">36</div><div class="rh rb" style="top:477px;background:#f0f0f0;border-right:1px solid #9a9a9a">37</div><div class="rh rb" style="top:494px;background:#f0f0f0;border-right:1px solid #9a9a9a;border-bottom:2px solid #909090">38</div><div class="rh rb" style="top:511px;background:#f0f0f0;border-right:1px solid #9a9a9a">40</div><div class="rh rb" style="top:528px;background:#f0f0f0;border-right:1px solid #9a9a9a">41</div><div class="rh rb" style="top:545px;background:#f0f0f0;border-right:1px solid #9a9a9a">42</div><div class="rh rb" style="top:562px;background:#f0f0f0;border-right:1px solid #9a9a9a">43</div>
<div style="left:26px;top:18px;width:65px;height:1px;background:#000"></div><div style="left:26px;top:18px;width:1px;height:18px;background:#000"></div><div style="left:88px;top:18px;width:3px;height:13px;background:#000"></div><div style="left:26px;top:33px;width:60px;height:3px;background:#000"></div><div style="left:86px;top:31px;width:6px;height:6px;background:#fff"></div><div style="left:87px;top:32px;width:5px;height:5px;background:#000"></div>
<div class="t" style="left:156px;top:103px;font-size:13.33px;letter-spacing:-.45px;width:47px;overflow:hidden;line-height:19px;height:17px">RecNum</div><div class="t" style="left:224px;top:103px;font-size:13.33px;letter-spacing:-.45px;line-height:19px">Feature</div><div class="t" style="left:350px;top:103px;font-size:13.33px;letter-spacing:-.45px;line-height:19px">on</div><div class="t" style="left:401px;top:103px;font-size:13.33px;letter-spacing:-.45px;line-height:19px">off</div>
<div class="fb" style="left:202px;top:104px;width:16px;height:16px"></div><svg style="left:202px;top:104px" width="16" height="16" viewBox="0 0 16 16"><path d="M3.500 6 L11.500 6 L7.500 10.500 Z" fill="#000"/></svg><div class="fb" style="left:332px;top:104px;width:16px;height:16px"></div><svg style="left:332px;top:104px" width="16" height="16" viewBox="0 0 16 16"><path d="M3.500 6 L11.500 6 L7.500 10.500 Z" fill="#000"/></svg><div class="fb" style="left:382px;top:104px;width:16px;height:16px"></div><svg style="left:382px;top:104px" width="16" height="16" viewBox="0 0 16 16"><path d="M3.500 6 L11.500 6 L7.500 10.500 Z" fill="#0000d0"/></svg><div class="fb" style="left:430px;top:104px;width:16px;height:16px"></div><svg style="left:430px;top:104px" width="16" height="16" viewBox="0 0 16 16"><path d="M3.500 6 L11.500 6 L7.500 10.500 Z" fill="#000"/></svg>
<div class="num" style="left:154px;top:120px;width:61px">2</div><div class="ft" style="left:224px;top:120px">TEST POST 1</div><div class="num" style="left:348px;top:120px;width:48.500px">1733</div><div class="num" style="left:399px;top:120px;width:43.500px">1311</div>
<div class="num" style="left:154px;top:137px;width:61px">4</div><div class="num" style="left:348px;top:137px;width:48.500px">1703</div><div class="num" style="left:399px;top:137px;width:43.500px">1311</div>
<div class="num" style="left:154px;top:154px;width:61px">6</div><div class="num" style="left:348px;top:154px;width:48.500px">1711</div><div class="num" style="left:399px;top:154px;width:43.500px">1308</div>
<div class="num" style="left:154px;top:171px;width:61px">7</div><div class="num" style="left:348px;top:171px;width:48.500px">1689</div><div class="num" style="left:399px;top:171px;width:43.500px">1302</div>
<div class="num" style="left:154px;top:188px;width:61px">9</div><div class="num" style="left:348px;top:188px;width:48.500px">1709</div><div class="num" style="left:399px;top:188px;width:43.500px">1309</div>
<div class="num" style="left:154px;top:205px;width:61px">10</div><div class="num" style="left:348px;top:205px;width:48.500px">1705</div><div class="num" style="left:399px;top:205px;width:43.500px">1307</div>
<div class="num" style="left:154px;top:222px;width:61px">11</div><div class="num" style="left:348px;top:222px;width:48.500px">1689</div><div class="num" style="left:399px;top:222px;width:43.500px">1300</div>
<div class="num" style="left:154px;top:239px;width:61px">12</div><div class="ft" style="left:224px;top:239px">START ROAD X</div><div class="num" style="left:348px;top:239px;width:48.500px">1687</div><div class="num" style="left:399px;top:239px;width:43.500px">1305</div>
<div class="num" style="left:154px;top:256px;width:61px">14</div><div class="num" style="left:348px;top:256px;width:48.500px">1689</div><div class="num" style="left:399px;top:256px;width:43.500px">1309</div>
<div class="num" style="left:154px;top:273px;width:61px">15</div><div class="num" style="left:348px;top:273px;width:48.500px">1689</div><div class="num" style="left:399px;top:273px;width:43.500px">1311</div>
<div class="num" style="left:154px;top:290px;width:61px">17</div><div class="num" style="left:348px;top:290px;width:48.500px">1698</div><div class="num" style="left:399px;top:290px;width:43.500px">1301</div>
<div class="num" style="left:154px;top:307px;width:61px">19</div><div class="num" style="left:348px;top:307px;width:48.500px">1686</div><div class="num" style="left:399px;top:307px;width:43.500px">1306</div>
<div class="num" style="left:154px;top:324px;width:61px">20</div><div class="num" style="left:348px;top:324px;width:48.500px">1678</div><div class="num" style="left:399px;top:324px;width:43.500px">1308</div>
<div class="num" style="left:154px;top:341px;width:61px">21</div><div class="num" style="left:348px;top:341px;width:48.500px">1686</div><div class="num" style="left:399px;top:341px;width:43.500px">1301</div>
<div class="num" style="left:154px;top:358px;width:61px">22</div><div class="ft" style="left:229px;top:358px">END ROAD X</div><div class="num" style="left:348px;top:358px;width:48.500px">1695</div><div class="num" style="left:399px;top:358px;width:43.500px">1303</div>
<div class="num" style="left:154px;top:375px;width:61px">24</div><div class="num" style="left:348px;top:375px;width:48.500px">1697</div><div class="num" style="left:399px;top:375px;width:43.500px">1311</div>
<div class="num" style="left:154px;top:392px;width:61px">25</div><div class="num" style="left:348px;top:392px;width:48.500px">1689</div><div class="num" style="left:399px;top:392px;width:43.500px">1309</div>
<div class="num" style="left:154px;top:409px;width:61px">26</div><div class="num" style="left:348px;top:409px;width:48.500px">1715</div><div class="num" style="left:399px;top:409px;width:43.500px">1327</div>
<div class="num" style="left:154px;top:426px;width:61px">27</div><div class="num" style="left:348px;top:426px;width:48.500px">1703</div><div class="num" style="left:399px;top:426px;width:43.500px">1319</div>
<div class="num" style="left:154px;top:443px;width:61px">29</div><div class="num" style="left:348px;top:443px;width:48.500px">1704</div><div class="num" style="left:399px;top:443px;width:43.500px">1333</div>
<div class="num" style="left:154px;top:460px;width:61px">30</div><div class="num" style="left:348px;top:460px;width:48.500px">1725</div><div class="num" style="left:399px;top:460px;width:43.500px">1335</div>
<div class="num" style="left:154px;top:477px;width:61px">31</div><div class="ft" style="left:234px;top:477px">OH POWER</div><div class="num" style="left:348px;top:477px;width:48.500px">1719</div><div class="num" style="left:399px;top:477px;width:43.500px">1325</div>
<div class="num" style="left:154px;top:494px;width:61px">32</div><div class="num" style="left:348px;top:494px;width:48.500px">1714</div><div class="num" style="left:399px;top:494px;width:43.500px">1334</div>
<div class="num" style="left:154px;top:511px;width:61px">34</div><div class="num" style="left:348px;top:511px;width:48.500px">1722</div><div class="num" style="left:399px;top:511px;width:43.500px">1343</div>
<div class="num" style="left:154px;top:528px;width:61px">35</div><div class="num" style="left:348px;top:528px;width:48.500px">1720</div><div class="num" style="left:399px;top:528px;width:43.500px">1329</div>
<div class="num" style="left:154px;top:545px;width:61px">36</div><div class="num" style="left:348px;top:545px;width:48.500px">1711</div><div class="num" style="left:399px;top:545px;width:43.500px">1307</div>
<div class="num" style="left:154px;top:562px;width:61px">37</div><div class="num" style="left:348px;top:562px;width:48.500px">1719</div><div class="num" style="left:399px;top:562px;width:43.500px">1311</div>
</div>
<div class="note" style="left:65px;top:181px">Record number
 created by the
 instrument</div>
<div class="note" style="left:239px;top:157px">Site notes
entered by
the operator</div>
<div class="note" style="left:364px;top:101px">Data copied
and pasted
from the
 instrument
output data
sheet</div>
<div class="note" style="left:535px;top:192px;letter-spacing:.06px">Graph drawn from highlighting the block of data and label</div>
<div style="left:452px;top:215px;width:660px;height:443px;background:#fff;border:1px solid #000"></div>
<svg style="left:452px;top:215px" width="660" height="443" viewBox="452 215 660 443" font-family="Liberation Sans, sans-serif">
<rect x="555.500" y="295.500" width="542" height="298" fill="#ffff99" stroke="#808080" stroke-width="1"/>
<rect x="556" y="355" width="541" height="1" fill="#000"/><rect x="556" y="414" width="541" height="1" fill="#000"/><rect x="556" y="474" width="541" height="1" fill="#000"/><rect x="556" y="533" width="541" height="1" fill="#000"/>
<rect x="555" y="295" width="1" height="299" fill="#000"/><rect x="551" y="295" width="4" height="1" fill="#000"/><rect x="551" y="355" width="4" height="1" fill="#000"/><rect x="551" y="414" width="4" height="1" fill="#000"/><rect x="551" y="474" width="4" height="1" fill="#000"/><rect x="551" y="533" width="4" height="1" fill="#000"/><rect x="551" y="593" width="4" height="1" fill="#000"/>
<rect x="555" y="593" width="543" height="4" fill="#000"/>
<polyline fill="none" stroke="#000040" stroke-width="1" points="556.0,390.7 556.5,391.4 557.1,390.6 557.6,391.8 558.2,389.9 558.7,391.5 559.2,392.7 559.8,391.5 560.3,392.9 560.9,391.0 561.4,391.3 562.0,390.7 562.5,391.1 563.0,391.5 563.6,390.0 564.1,388.9 564.7,388.5 565.2,388.8 565.7,391.5 566.3,390.8 566.8,390.8 567.4,390.2 567.9,389.5 568.5,389.8 569.0,390.9 569.5,390.8 570.1,390.5 570.6,390.7 571.2,391.2 571.7,389.8 572.2,390.4 572.8,390.6 573.3,390.5 573.9,389.9 574.4,389.2 575.0,388.3 575.5,389.6 576.0,389.9 576.6,389.9 577.1,389.7 577.7,390.3 578.2,390.3 578.7,390.0 579.3,389.6 579.8,392.3 580.4,391.2 580.9,390.1 581.5,390.4 582.0,391.3 582.5,391.3 583.1,390.4 583.6,390.7 584.2,388.8 584.7,389.9 585.2,390.3 585.8,390.5 586.3,388.7 586.9,391.2 587.4,390.0 588.0,389.6 588.5,391.3 589.0,390.8 589.6,390.3 590.1,388.4 590.7,389.7 591.2,389.5 591.7,387.6 592.3,387.9 592.8,388.9 593.4,389.9 593.9,389.6 594.4,390.4 595.0,389.6 595.5,389.7 596.1,390.5 596.6,389.7 597.2,390.7 597.7,392.3 598.2,390.1 598.8,392.3 599.3,390.8 599.9,391.4 600.4,391.4 600.9,390.0 601.5,390.1 602.0,390.3 602.6,391.0 603.1,391.2 603.7,390.6 604.2,390.5 604.7,390.0 605.3,389.3 605.8,391.2 606.4,392.0 606.9,390.8 607.4,390.2 608.0,389.6 608.5,391.1 609.1,391.5 609.6,390.4 610.2,389.5 610.7,388.2 611.2,389.4 611.8,389.9 612.3,389.8 612.9,390.0 613.4,388.9 613.9,388.9 614.5,389.3 615.0,388.5 615.6,389.3 616.1,388.4 616.7,389.5 617.2,388.7 617.7,387.4 618.3,388.2 618.8,387.2 619.4,387.5 619.9,385.8 620.4,386.4 621.0,386.3 621.5,386.1 622.1,385.5 622.6,384.3 623.2,384.9 623.7,384.3 624.2,384.1 624.8,384.3 625.3,385.0 625.9,384.2 626.4,383.8 626.9,384.5 627.5,385.3 628.0,385.6 628.6,386.8 629.1,386.5 629.6,387.2 630.2,386.3 630.7,385.9 631.3,386.6 631.8,387.2 632.4,388.4 632.9,389.1 633.4,386.5 634.0,387.1 634.5,387.3 635.1,388.0 635.6,387.1 636.1,386.1 636.7,385.6 637.2,387.6 637.8,388.2 638.3,386.0 638.9,386.4 639.4,385.7 639.9,386.8 640.5,384.8 641.0,385.6 641.6,386.1 642.1,386.5 642.6,387.2 643.2,387.5 643.7,386.6 644.3,387.4 644.8,388.9 645.4,389.3 645.9,389.6 646.4,388.9 647.0,386.9 647.5,387.1 648.1,387.3 648.6,386.6 649.1,387.9 649.7,387.1 650.2,385.7 650.8,384.5 651.3,384.3 651.9,384.9 652.4,383.9 652.9,382.5 653.5,382.5 654.0,381.8 654.6,383.3 655.1,383.7 655.6,384.3 656.2,383.9 656.7,384.3 657.3,385.6 657.8,385.6 658.4,385.9 658.9,386.8 659.4,386.3 660.0,387.1 660.5,388.6 661.1,389.4 661.6,389.4 662.1,388.4 662.7,388.2 663.2,387.6 663.8,388.6 664.3,386.8 664.8,387.3 665.4,387.5 665.9,386.4 666.5,387.2 667.0,387.2 667.6,388.2 668.1,386.3 668.6,386.8 669.2,385.9 669.7,385.2 670.3,385.0 670.8,384.3 671.3,384.4 671.9,382.4 672.4,383.6 673.0,382.1 673.5,381.3 674.1,382.0 674.6,382.1 675.1,380.9 675.7,380.7 676.2,381.4 676.8,380.9 677.3,381.5 677.8,382.9 678.4,380.4 678.9,380.0 679.5,378.7 680.0,378.8 680.6,377.6 681.1,379.2 681.6,378.0 682.2,378.7 682.7,378.0 683.3,378.2 683.8,376.8 684.3,376.5 684.9,375.8 685.4,377.3 686.0,377.6 686.5,375.2 687.1,375.2 687.6,375.6 688.1,374.0 688.7,373.7 689.2,373.3 689.8,373.0 690.3,372.9 690.8,371.1 691.4,372.5 691.9,370.6 692.5,370.3 693.0,370.6 693.6,372.3 694.1,371.2 694.6,372.3 695.2,371.2 695.7,372.7 696.3,372.6 696.8,372.0 697.3,372.4 697.9,370.1 698.4,371.0 699.0,371.5 699.5,370.5 700.1,368.5 700.6,370.6 701.1,370.2 701.7,369.7 702.2,368.4 702.8,369.2 703.3,368.3 703.8,368.8 704.4,368.2 704.9,369.8 705.5,369.8 706.0,370.4 706.5,371.1 707.1,369.2 707.6,368.3 708.2,369.6 708.7,370.3 709.3,367.9 709.8,367.4 710.3,364.8 710.9,364.3 711.4,366.0 712.0,365.9 712.5,365.6 713.0,366.9 713.6,367.0 714.1,367.1 714.7,367.5 715.2,367.6 715.8,368.6 716.3,371.6 716.8,370.5 717.4,372.1 717.9,370.2 718.5,370.1 719.0,368.7 719.5,368.0 720.1,368.3 720.6,370.0 721.2,369.4 721.7,369.5 722.3,369.3 722.8,368.1 723.3,367.8 723.9,369.0 724.4,367.0 725.0,367.7 725.5,368.9 726.0,368.4 726.6,370.5 727.1,369.7 727.7,369.3 728.2,368.6 728.8,367.8 729.3,365.3 729.8,366.5 730.4,364.8 730.9,365.3 731.5,367.2 732.0,366.7 732.5,365.4 733.1,365.2 733.6,365.6 734.2,366.8 734.7,366.8 735.3,365.5 735.8,366.2 736.3,365.4 736.9,364.4 737.4,372.0 738.0,364.0 738.5,363.6 739.0,362.5 739.6,362.4 740.1,362.6 740.7,362.6 741.2,361.5 741.7,360.7 742.3,361.3 742.8,360.2 743.4,360.4 743.9,361.6 744.5,360.5 745.0,361.0 745.5,359.6 746.1,361.0 746.6,361.1 747.2,360.1 747.7,361.4 748.2,360.8 748.8,363.4 749.3,364.5 749.9,363.3 750.4,364.8 751.0,362.9 751.5,363.4 752.0,364.7 752.6,364.1 753.1,363.7 753.7,365.3 754.2,365.5 754.7,366.2 755.3,366.5 755.8,367.7 756.4,366.3 756.9,366.5 757.5,366.9 758.0,365.6 758.5,367.3 759.1,368.2 759.6,368.6 760.2,368.1 760.7,368.8 761.2,367.5 761.8,368.2 762.3,365.6 762.9,366.5 763.4,366.8 764.0,367.0 764.5,365.4 765.0,366.0 765.6,366.6 766.1,365.7 766.7,364.8 767.2,365.7 767.7,364.9 768.3,363.0 768.8,363.6 769.4,366.1 769.9,365.3 770.5,364.6 771.0,366.0 771.5,364.5 772.1,365.9 772.6,365.6 773.2,364.5 773.7,365.9 774.2,366.0 774.8,366.0 775.3,363.9 775.9,366.1 776.4,367.5 776.9,368.4 777.5,368.2 778.0,369.3 778.6,368.7 779.1,368.3 779.7,369.5 780.2,369.9 780.7,370.0 781.3,370.8 781.8,371.0 782.4,370.5 782.9,372.7 783.4,372.3 784.0,373.0 784.5,371.6 785.1,371.3 785.6,371.6 786.2,369.5 786.7,369.5 787.2,370.6 787.8,369.5 788.3,368.5 788.9,370.8 789.4,369.3 789.9,368.0 790.5,367.6 791.0,367.2 791.6,366.5 792.1,367.2 792.7,367.0 793.2,368.6 793.7,368.4 794.3,369.0 794.8,369.8 795.4,368.7 795.9,370.6 796.4,370.4 797.0,371.6 797.5,371.9 798.1,371.7 798.6,372.3 799.2,371.6 799.7,371.4 800.2,371.9 800.8,371.5 801.3,370.9 801.9,371.8 802.4,370.3 802.9,371.3 803.5,370.8 804.0,370.8 804.6,368.9 805.1,369.0 805.7,370.6 806.2,369.8 806.7,369.3 807.3,369.8 807.8,369.4 808.4,367.5 808.9,369.5 809.4,367.5 810.0,368.3 810.5,366.6 811.1,367.3 811.6,366.7 812.1,369.0 812.7,369.4 813.2,367.1 813.8,366.6 814.3,367.9 814.9,367.8 815.4,369.3 815.9,368.5 816.5,367.9 817.0,367.1 817.6,366.8 818.1,367.3 818.6,368.6 819.2,367.1 819.7,365.9 820.3,366.5 820.8,366.6 821.4,367.8 821.9,368.2 822.4,367.4 823.0,367.2 823.5,367.0 824.1,367.6 824.6,367.8 825.1,369.2 825.7,368.7 826.2,367.8 826.8,368.2 827.3,367.3 827.9,368.4 828.4,369.3 828.9,368.0 829.5,368.5 830.0,368.7 830.6,369.7 831.1,369.3 831.6,370.4 832.2,371.2 832.7,371.8 833.3,373.3 833.8,372.4 834.4,374.2 834.9,373.4 835.4,374.1 836.0,374.3 836.5,375.4 837.1,374.2 837.6,374.6 838.1,375.9 838.7,374.0 839.2,376.8 839.8,377.6 840.3,377.3 840.9,377.6 841.4,377.0 841.9,377.3 842.5,377.0 843.0,376.4 843.6,378.1 844.1,377.4 844.6,377.9 845.2,377.0 845.7,377.1 846.3,376.3 846.8,376.2 847.3,375.9 847.9,376.5 848.4,377.6 849.0,377.8 849.5,376.7 850.1,375.6 850.6,376.3 851.1,376.0 851.7,374.5 852.2,375.5 852.8,376.1 853.3,375.5 853.8,376.5 854.4,374.9 854.9,375.7 855.5,376.1 856.0,377.0 856.6,377.3 857.1,377.7 857.6,379.3 858.2,377.3 858.7,376.9 859.3,376.4 859.8,377.7 860.3,377.8 860.9,377.2 861.4,378.1 862.0,379.2 862.5,378.4 863.1,377.4 863.6,377.4 864.1,377.2 864.7,376.8 865.2,377.8 865.8,377.8 866.3,377.5 866.8,377.7 867.4,379.2 867.9,379.4 868.5,379.3 869.0,379.1 869.6,379.1 870.1,380.9 870.6,381.4 871.2,380.8 871.7,379.8 872.3,379.2 872.8,381.0 873.3,382.2 873.9,381.8 874.4,382.7 875.0,384.1 875.5,382.4 876.1,382.7 876.6,383.9 877.1,384.4 877.7,383.2 878.2,384.4 878.8,385.6 879.3,385.5 879.8,386.2 880.4,385.3 880.9,386.5 881.5,386.0 882.0,385.8 882.5,384.5 883.1,385.1 883.6,384.3 884.2,385.1 884.7,385.2 885.3,385.0 885.8,384.8 886.3,387.4 886.9,385.5 887.4,386.0 888.0,384.7 888.5,383.6 889.0,383.9 889.6,385.0 890.1,385.9 890.7,385.5 891.2,385.7 891.8,385.8 892.3,386.6 892.8,386.4 893.4,386.1 893.9,386.9 894.5,387.9 895.0,388.2 895.5,388.8 896.1,388.6 896.6,389.5 897.2,389.4 897.7,389.5 898.3,388.9 898.8,389.6 899.3,390.3 899.9,389.5 900.4,389.1 901.0,390.0 901.5,390.7 902.0,390.3 902.6,391.2 903.1,391.5 903.7,393.0 904.2,392.4 904.8,391.7 905.3,391.8 905.8,392.4 906.4,392.3 906.9,392.8 907.5,392.3 908.0,392.3 908.5,392.1 909.1,393.4 909.6,393.5 910.2,392.5 910.7,392.5 911.3,392.9 911.8,392.7 912.3,393.5 912.9,391.4 913.4,392.5 914.0,390.7 914.5,392.7 915.0,390.1 915.6,391.5 916.1,391.4 916.7,391.2 917.2,392.0 917.7,391.7 918.3,391.5 918.8,391.0 919.4,392.3 919.9,392.1 920.5,392.1 921.0,393.1 921.5,391.8 922.1,392.5 922.6,392.5 923.2,393.5 923.7,394.3 924.2,393.0 924.8,393.6 925.3,393.9 925.9,393.7 926.4,394.0 927.0,393.7 927.5,390.8 928.0,391.6 928.6,392.2 929.1,391.0 929.7,391.0 930.2,391.5 930.7,391.0 931.3,391.1 931.8,391.7 932.4,391.0 932.9,390.7 933.5,391.0 934.0,390.2 934.5,391.4 935.1,391.0 935.6,389.9 936.2,389.4 936.7,388.8 937.2,390.7 937.8,391.1 938.3,391.1 938.9,390.1 939.4,392.3 940.0,393.3 940.5,391.7 941.0,391.8 941.6,391.4 942.1,392.6 942.7,392.5 943.2,392.2 943.7,392.8 944.3,394.2 944.8,394.4 945.4,393.3 945.9,394.9 946.5,393.5 947.0,393.6 947.5,392.5 948.1,392.2 948.6,391.8 949.2,392.1 949.7,391.6 950.2,391.1 950.8,390.5 951.3,391.1 951.9,392.2 952.4,391.0 952.9,391.1 953.5,388.9 954.0,390.2 954.6,389.6 955.1,389.3 955.7,391.1 956.2,392.1 956.7,391.1 957.3,390.8 957.8,390.1 958.4,389.7 958.9,388.5 959.4,388.6 960.0,388.2 960.5,389.4 961.1,387.7 961.6,389.3 962.2,388.5 962.7,389.0 963.2,389.6 963.8,389.7 964.3,389.4 964.9,389.4 965.4,389.0 965.9,388.7 966.5,389.8 967.0,389.4 967.6,389.7 968.1,389.9 968.7,390.5 969.2,388.0 969.7,390.0 970.3,388.8 970.8,389.1 971.4,390.8 971.9,389.3 972.4,390.6 973.0,390.0 973.5,389.5 974.1,389.1 974.6,389.9 975.2,390.0 975.7,389.5 976.2,389.3 976.8,389.5 977.3,389.4 977.9,387.9 978.4,388.0 978.9,388.3 979.5,388.1 980.0,389.1 980.6,389.4 981.1,388.6 981.7,388.8 982.2,388.1 982.7,388.2 983.3,386.9 983.8,388.0 984.4,388.2 984.9,388.7 985.4,389.8 986.0,389.1 986.5,388.8 987.1,389.0 987.6,389.8 988.2,389.6 988.7,390.3 989.2,389.8 989.8,387.9 990.3,390.3 990.9,389.9 991.4,392.1 991.9,389.7 992.5,390.4 993.0,389.5 993.6,390.3 994.1,390.0 994.6,390.4 995.2,390.0 995.7,388.8 996.3,388.4 996.8,386.9 997.4,388.0 997.9,387.5 998.4,389.3 999.0,387.6 999.5,387.1 1000.1,387.3 1000.6,386.1 1001.1,386.9 1001.7,386.7 1002.2,386.8 1002.8,388.3 1003.3,387.1 1003.9,387.8 1004.4,387.6 1004.9,389.1 1005.5,392.1 1006.0,390.8 1006.6,391.2 1007.1,392.6 1007.6,391.7 1008.2,391.6 1008.7,391.1 1009.3,391.6 1009.8,389.5 1010.4,389.2 1010.9,389.5 1011.4,389.7 1012.0,388.4 1012.5,389.2 1013.1,388.0 1013.6,386.1 1014.1,386.3 1014.7,386.3 1015.2,386.8 1015.8,386.7 1016.3,387.2 1016.9,386.1 1017.4,383.9 1017.9,387.4 1018.5,387.1 1019.0,386.3 1019.6,387.1 1020.1,385.8 1020.6,385.5 1021.2,384.4 1021.7,383.5 1022.3,384.6 1022.8,383.8 1023.4,384.7 1023.9,385.1 1024.4,384.8 1025.0,385.8 1025.5,385.1 1026.1,385.7 1026.6,386.6 1027.1,385.4 1027.7,385.2 1028.2,384.1 1028.8,385.3 1029.3,386.5 1029.8,387.2 1030.4,387.5 1030.9,386.2 1031.5,387.1 1032.0,386.3 1032.6,386.4 1033.1,385.9 1033.6,384.6 1034.2,385.1 1034.7,384.3 1035.3,384.6 1035.8,384.7 1036.3,384.4 1036.9,384.0 1037.4,383.3 1038.0,385.4 1038.5,385.0 1039.1,383.8 1039.6,382.4 1040.1,383.5 1040.7,384.6 1041.2,383.2 1041.8,382.5 1042.3,381.6 1042.8,383.9 1043.4,384.1 1043.9,383.3 1044.5,381.0 1045.0,383.4 1045.6,382.3 1046.1,383.8 1046.6,382.9 1047.2,383.1 1047.7,382.2 1048.3,383.2 1048.8,380.8 1049.3,382.0 1049.9,380.2 1050.4,381.7 1051.0,382.4 1051.5,382.4 1052.1,382.2 1052.6,380.1 1053.1,381.3 1053.7,380.3 1054.2,380.5 1054.8,379.8 1055.3,378.5 1055.8,378.2 1056.4,378.1 1056.9,378.5 1057.5,376.9 1058.0,377.2 1058.6,377.3 1059.1,378.1 1059.6,377.4 1060.2,377.4 1060.7,377.7 1061.3,378.9 1061.8,376.9 1062.3,378.3 1062.9,377.8 1063.4,378.0 1064.0,375.4 1064.5,377.3 1065.0,377.7 1065.6,379.0 1066.1,377.8 1066.7,375.5 1067.2,377.1 1067.8,375.6 1068.3,375.9 1068.8,375.7 1069.4,376.2 1069.9,375.6 1070.5,375.5 1071.0,377.1 1071.5,377.2 1072.1,375.4 1072.6,375.4 1073.2,374.7 1073.7,373.8 1074.3,373.2 1074.8,374.2 1075.3,373.7 1075.9,371.1 1076.4,371.8 1077.0,371.4 1077.5,370.2 1078.0,371.0 1078.6,369.4 1079.1,370.4 1079.7,370.9 1080.2,370.5 1080.8,371.0 1081.3,371.6 1081.8,373.2 1082.4,371.7 1082.9,371.7 1083.5,370.5 1084.0,372.3 1084.5,372.5 1085.1,369.8 1085.6,370.2 1086.2,371.1 1086.7,371.0 1087.3,370.3 1087.8,368.6 1088.3,370.3 1088.9,370.1 1089.4,370.1 1090.0,369.9 1090.5,370.8 1091.0,370.2 1091.6,371.5 1092.1,369.1 1092.7,369.6 1093.2,369.3 1093.8,366.2 1094.3,367.5 1094.8,365.5 1095.4,367.7 1095.9,366.4 1096.5,365.6 1097.0,363.7"/>
<polyline fill="none" stroke="#cc2ccc" stroke-width="1.100" points="556.0,437.3 556.5,438.0 557.1,437.2 557.6,438.8 558.2,439.7 558.7,439.8 559.2,439.6 559.8,439.9 560.3,439.3 560.9,439.5 561.4,439.2 562.0,439.4 562.5,437.9 563.0,437.5 563.6,437.0 564.1,438.3 564.7,438.5 565.2,437.6 565.7,436.9 566.3,436.9 566.8,438.1 567.4,437.8 567.9,437.5 568.5,436.9 569.0,437.1 569.5,438.6 570.1,437.3 570.6,437.0 571.2,438.5 571.7,438.3 572.2,436.7 572.8,437.8 573.3,436.3 573.9,437.2 574.4,435.0 575.0,435.3 575.5,437.0 576.0,436.5 576.6,436.2 577.1,436.8 577.7,437.0 578.2,436.7 578.7,436.5 579.3,438.4 579.8,439.1 580.4,438.5 580.9,437.0 581.5,436.9 582.0,437.1 582.5,437.9 583.1,439.2 583.6,438.0 584.2,438.1 584.7,437.7 585.2,438.0 585.8,437.5 586.3,438.2 586.9,439.2 587.4,438.4 588.0,438.1 588.5,438.3 589.0,437.3 589.6,439.4 590.1,437.8 590.7,437.9 591.2,437.5 591.7,439.3 592.3,438.5 592.8,438.1 593.4,439.9 593.9,439.1 594.4,438.2 595.0,438.4 595.5,438.7 596.1,438.0 596.6,438.2 597.2,438.2 597.7,439.0 598.2,439.4 598.8,439.7 599.3,439.0 599.9,439.4 600.4,438.8 600.9,439.6 601.5,439.4 602.0,438.6 602.6,439.6 603.1,437.8 603.7,437.5 604.2,437.4 604.7,438.0 605.3,437.3 605.8,437.1 606.4,436.4 606.9,437.7 607.4,437.6 608.0,439.9 608.5,439.8 609.1,438.2 609.6,439.5 610.2,439.1 610.7,439.7 611.2,438.2 611.8,439.4 612.3,439.8 612.9,438.8 613.4,438.0 613.9,438.0 614.5,438.6 615.0,440.6 615.6,441.0 616.1,440.9 616.7,439.5 617.2,438.7 617.7,439.0 618.3,438.5 618.8,438.2 619.4,438.3 619.9,439.1 620.4,438.8 621.0,438.9 621.5,438.5 622.1,438.4 622.6,438.3 623.2,439.5 623.7,439.2 624.2,440.1 624.8,439.1 625.3,439.7 625.9,438.0 626.4,438.0 626.9,438.3 627.5,437.9 628.0,438.2 628.6,437.7 629.1,438.1 629.6,437.8 630.2,438.3 630.7,438.2 631.3,437.6 631.8,437.8 632.4,438.3 632.9,437.4 633.4,438.2 634.0,439.4 634.5,438.8 635.1,439.1 635.6,439.4 636.1,438.3 636.7,439.5 637.2,441.1 637.8,438.9 638.3,440.5 638.9,438.9 639.4,439.9 639.9,437.7 640.5,439.1 641.0,439.0 641.6,437.7 642.1,437.5 642.6,437.3 643.2,437.3 643.7,438.3 644.3,438.3 644.8,436.4 645.4,437.4 645.9,438.4 646.4,438.6 647.0,440.0 647.5,437.7 648.1,438.4 648.6,438.5 649.1,439.2 649.7,437.8 650.2,437.2 650.8,437.8 651.3,438.3 651.9,437.0 652.4,438.2 652.9,438.4 653.5,439.1 654.0,436.7 654.6,438.2 655.1,437.7 655.6,437.8 656.2,438.9 656.7,440.1 657.3,439.4 657.8,438.9 658.4,439.8 658.9,438.4 659.4,438.4 660.0,438.1 660.5,437.6 661.1,438.3 661.6,440.1 662.1,439.5 662.7,439.4 663.2,438.9 663.8,439.7 664.3,439.2 664.8,438.2 665.4,438.5 665.9,439.7 666.5,439.0 667.0,439.8 667.6,439.1 668.1,440.5 668.6,439.7 669.2,439.6 669.7,438.8 670.3,439.4 670.8,438.8 671.3,437.5 671.9,438.3 672.4,437.5 673.0,439.3 673.5,439.5 674.1,439.0 674.6,439.3 675.1,436.8 675.7,439.0 676.2,438.2 676.8,438.9 677.3,440.8 677.8,438.2 678.4,438.0 678.9,438.5 679.5,438.8 680.0,437.2 680.6,437.1 681.1,439.0 681.6,438.2 682.2,438.7 682.7,437.4 683.3,437.1 683.8,436.3 684.3,437.6 684.9,438.9 685.4,438.6 686.0,438.1 686.5,438.3 687.1,438.6 687.6,438.1 688.1,438.5 688.7,439.8 689.2,440.6 689.8,438.7 690.3,437.2 690.8,439.2 691.4,439.2 691.9,439.5 692.5,439.0 693.0,438.2 693.6,438.7 694.1,439.1 694.6,439.3 695.2,437.5 695.7,438.4 696.3,437.7 696.8,437.4 697.3,437.8 697.9,437.4 698.4,439.4 699.0,438.8 699.5,438.4 700.1,437.8 700.6,437.9 701.1,437.5 701.7,438.0 702.2,438.5 702.8,438.7 703.3,437.0 703.8,437.1 704.4,437.4 704.9,436.5 705.5,437.4 706.0,437.4 706.5,437.6 707.1,438.0 707.6,437.3 708.2,438.8 708.7,439.0 709.3,437.9 709.8,438.2 710.3,438.6 710.9,437.5 711.4,437.4 712.0,438.2 712.5,435.9 713.0,435.9 713.6,437.2 714.1,438.0 714.7,437.2 715.2,438.2 715.8,439.8 716.3,438.9 716.8,438.2 717.4,438.0 717.9,437.1 718.5,437.9 719.0,437.9 719.5,438.4 720.1,439.2 720.6,438.4 721.2,438.1 721.7,438.1 722.3,439.2 722.8,437.1 723.3,437.3 723.9,436.9 724.4,437.3 725.0,438.0 725.5,437.7 726.0,438.1 726.6,437.8 727.1,436.9 727.7,436.5 728.2,435.7 728.8,436.7 729.3,436.6 729.8,437.5 730.4,438.0 730.9,436.7 731.5,435.9 732.0,436.9 732.5,436.2 733.1,436.7 733.6,437.2 734.2,436.6 734.7,438.1 735.3,436.7 735.8,437.0 736.3,436.4 736.9,434.2 737.4,435.3 738.0,435.8 738.5,436.7 739.0,436.5 739.6,435.9 740.1,435.8 740.7,435.9 741.2,436.8 741.7,436.4 742.3,437.4 742.8,437.6 743.4,436.3 743.9,437.2 744.5,434.9 745.0,435.8 745.5,435.4 746.1,435.9 746.6,437.2 747.2,436.8 747.7,436.5 748.2,437.6 748.8,436.4 749.3,435.8 749.9,437.1 750.4,437.4 751.0,435.8 751.5,436.5 752.0,437.3 752.6,436.9 753.1,436.6 753.7,436.9 754.2,437.1 754.7,436.5 755.3,437.5 755.8,436.0 756.4,436.6 756.9,438.6 757.5,437.0 758.0,437.1 758.5,435.4 759.1,435.8 759.6,435.7 760.2,436.7 760.7,436.8 761.2,438.7 761.8,437.3 762.3,437.5 762.9,437.8 763.4,438.3 764.0,438.7 764.5,436.9 765.0,439.2 765.6,438.2 766.1,437.5 766.7,436.4 767.2,436.9 767.7,436.1 768.3,437.3 768.8,437.3 769.4,438.0 769.9,437.4 770.5,437.9 771.0,439.9 771.5,439.9 772.1,439.1 772.6,437.9 773.2,439.3 773.7,437.4 774.2,436.8 774.8,438.7 775.3,438.0 775.9,439.3 776.4,439.3 776.9,440.6 777.5,440.9 778.0,440.0 778.6,438.6 779.1,439.0 779.7,439.9 780.2,439.2 780.7,436.5 781.3,437.3 781.8,437.7 782.4,438.1 782.9,438.1 783.4,439.2 784.0,437.8 784.5,438.6 785.1,437.0 785.6,436.1 786.2,436.6 786.7,437.1 787.2,437.2 787.8,437.4 788.3,438.5 788.9,439.0 789.4,438.9 789.9,438.9 790.5,438.1 791.0,437.6 791.6,437.0 792.1,437.5 792.7,437.2 793.2,437.7 793.7,438.8 794.3,439.1 794.8,439.9 795.4,438.4 795.9,436.7 796.4,436.9 797.0,439.4 797.5,439.5 798.1,438.7 798.6,439.7 799.2,438.8 799.7,440.0 800.2,438.9 800.8,438.4 801.3,439.1 801.9,437.9 802.4,438.1 802.9,440.0 803.5,439.6 804.0,438.1 804.6,438.2 805.1,438.4 805.7,437.9 806.2,438.6 806.7,439.6 807.3,439.1 807.8,439.5 808.4,439.3 808.9,439.0 809.4,438.2 810.0,439.2 810.5,440.0 811.1,438.8 811.6,438.0 812.1,438.8 812.7,438.8 813.2,439.6 813.8,439.4 814.3,438.9 814.9,437.6 815.4,438.7 815.9,438.7 816.5,437.6 817.0,437.0 817.6,436.4 818.1,438.1 818.6,438.0 819.2,435.6 819.7,436.6 820.3,437.2 820.8,437.9 821.4,438.3 821.9,438.2 822.4,439.0 823.0,439.6 823.5,438.9 824.1,440.0 824.6,439.1 825.1,438.1 825.7,438.5 826.2,437.4 826.8,437.8 827.3,437.4 827.9,437.7 828.4,438.4 828.9,436.5 829.5,438.0 830.0,438.5 830.6,438.4 831.1,439.1 831.6,439.1 832.2,438.5 832.7,437.7 833.3,438.8 833.8,439.3 834.4,437.7 834.9,437.6 835.4,437.2 836.0,438.6 836.5,438.1 837.1,437.3 837.6,439.2 838.1,439.2 838.7,439.0 839.2,438.9 839.8,438.5 840.3,438.4 840.9,439.1 841.4,438.9 841.9,438.1 842.5,438.1 843.0,439.5 843.6,438.1 844.1,436.8 844.6,437.4 845.2,436.6 845.7,439.2 846.3,438.7 846.8,438.5 847.3,438.2 847.9,439.3 848.4,437.4 849.0,437.4 849.5,436.1 850.1,437.9 850.6,437.7 851.1,439.2 851.7,438.2 852.2,437.2 852.8,437.1 853.3,438.3 853.8,437.6 854.4,438.2 854.9,437.7 855.5,437.5 856.0,437.5 856.6,439.4 857.1,438.0 857.6,438.6 858.2,439.2 858.7,438.2 859.3,437.2 859.8,439.2 860.3,440.3 860.9,439.1 861.4,437.9 862.0,439.0 862.5,438.7 863.1,438.0 863.6,438.0 864.1,436.4 864.7,436.9 865.2,436.8 865.8,436.7 866.3,438.2 866.8,438.6 867.4,440.0 867.9,437.0 868.5,437.3 869.0,437.3 869.6,439.1 870.1,439.7 870.6,439.2 871.2,438.9 871.7,438.1 872.3,437.9 872.8,437.9 873.3,436.2 873.9,439.1 874.4,439.4 875.0,440.6 875.5,440.5 876.1,439.8 876.6,439.8 877.1,437.7 877.7,437.3 878.2,438.6 878.8,438.2 879.3,437.0 879.8,437.7 880.4,437.0 880.9,437.6 881.5,439.1 882.0,437.5 882.5,437.3 883.1,437.9 883.6,437.7 884.2,437.6 884.7,436.6 885.3,436.5 885.8,434.7 886.3,435.6 886.9,437.2 887.4,435.8 888.0,436.0 888.5,436.8 889.0,437.5 889.6,437.9 890.1,436.4 890.7,436.2 891.2,437.9 891.8,437.0 892.3,437.3 892.8,436.6 893.4,436.5 893.9,434.7 894.5,435.9 895.0,435.2 895.5,435.9 896.1,436.3 896.6,438.5 897.2,439.0 897.7,439.0 898.3,438.2 898.8,437.2 899.3,438.3 899.9,437.7 900.4,438.1 901.0,439.1 901.5,438.6 902.0,438.6 902.6,437.7 903.1,439.1 903.7,439.2 904.2,439.4 904.8,440.3 905.3,438.0 905.8,438.3 906.4,439.0 906.9,439.0 907.5,439.0 908.0,439.2 908.5,437.6 909.1,438.1 909.6,439.3 910.2,438.8 910.7,438.5 911.3,439.2 911.8,437.4 912.3,438.4 912.9,439.7 913.4,438.9 914.0,438.0 914.5,438.8 915.0,438.3 915.6,437.8 916.1,438.3 916.7,437.1 917.2,438.5 917.7,437.5 918.3,437.6 918.8,438.7 919.4,438.6 919.9,438.8 920.5,439.8 921.0,440.4 921.5,441.1 922.1,439.2 922.6,439.6 923.2,437.7 923.7,438.8 924.2,439.8 924.8,438.5 925.3,438.9 925.9,439.4 926.4,438.8 927.0,438.2 927.5,439.6 928.0,438.0 928.6,438.4 929.1,439.3 929.7,439.1 930.2,440.9 930.7,441.3 931.3,440.6 931.8,441.4 932.4,440.9 932.9,439.0 933.5,438.9 934.0,439.4 934.5,439.5 935.1,438.0 935.6,440.7 936.2,438.7 936.7,438.1 937.2,439.2 937.8,439.4 938.3,440.7 938.9,440.1 939.4,440.0 940.0,440.3 940.5,439.2 941.0,438.2 941.6,438.5 942.1,439.8 942.7,439.3 943.2,440.4 943.7,439.4 944.3,440.0 944.8,439.7 945.4,440.2 945.9,439.7 946.5,439.7 947.0,439.1 947.5,440.3 948.1,439.8 948.6,440.0 949.2,440.2 949.7,439.0 950.2,438.5 950.8,439.0 951.3,440.2 951.9,438.9 952.4,438.3 952.9,438.1 953.5,438.5 954.0,438.1 954.6,438.1 955.1,439.2 955.7,438.4 956.2,438.9 956.7,438.2 957.3,438.7 957.8,439.5 958.4,437.8 958.9,438.7 959.4,439.3 960.0,439.3 960.5,439.5 961.1,439.8 961.6,438.5 962.2,438.9 962.7,439.7 963.2,440.6 963.8,438.8 964.3,438.6 964.9,437.9 965.4,438.7 965.9,438.2 966.5,438.0 967.0,439.4 967.6,441.2 968.1,438.5 968.7,440.3 969.2,439.1 969.7,439.8 970.3,439.9 970.8,440.6 971.4,439.8 971.9,438.9 972.4,439.1 973.0,439.9 973.5,438.9 974.1,439.5 974.6,439.4 975.2,439.5 975.7,439.5 976.2,439.9 976.8,440.3 977.3,439.5 977.9,439.2 978.4,437.5 978.9,437.8 979.5,437.4 980.0,439.1 980.6,438.3 981.1,438.3 981.7,439.3 982.2,440.2 982.7,440.7 983.3,439.3 983.8,439.5 984.4,440.3 984.9,439.1 985.4,439.1 986.0,438.2 986.5,438.3 987.1,439.5 987.6,439.5 988.2,439.1 988.7,438.8 989.2,440.4 989.8,440.4 990.3,438.8 990.9,440.9 991.4,439.7 991.9,439.4 992.5,439.0 993.0,438.7 993.6,439.6 994.1,438.3 994.6,438.9 995.2,438.9 995.7,440.6 996.3,440.2 996.8,440.1 997.4,440.1 997.9,440.2 998.4,439.9 999.0,437.6 999.5,438.9 1000.1,438.9 1000.6,439.7 1001.1,439.8 1001.7,439.1 1002.2,438.5 1002.8,438.2 1003.3,439.1 1003.9,439.2 1004.4,438.6 1004.9,438.7 1005.5,439.4 1006.0,438.8 1006.6,439.0 1007.1,438.7 1007.6,437.0 1008.2,438.4 1008.7,439.0 1009.3,439.9 1009.8,440.7 1010.4,439.4 1010.9,439.9 1011.4,439.8 1012.0,439.6 1012.5,440.2 1013.1,440.5 1013.6,438.8 1014.1,440.3 1014.7,439.7 1015.2,439.0 1015.8,438.6 1016.3,438.9 1016.9,438.2 1017.4,439.8 1017.9,439.9 1018.5,438.9 1019.0,439.8 1019.6,439.8 1020.1,439.6 1020.6,440.3 1021.2,439.7 1021.7,439.3 1022.3,439.8 1022.8,438.1 1023.4,437.8 1023.9,439.1 1024.4,440.1 1025.0,438.3 1025.5,438.9 1026.1,438.6 1026.6,438.8 1027.1,439.6 1027.7,440.7 1028.2,441.4 1028.8,441.1 1029.3,440.7 1029.8,440.1 1030.4,438.2 1030.9,439.2 1031.5,438.3 1032.0,438.0 1032.6,438.9 1033.1,437.9 1033.6,440.1 1034.2,440.2 1034.7,440.1 1035.3,440.1 1035.8,439.9 1036.3,439.7 1036.9,440.1 1037.4,439.2 1038.0,439.5 1038.5,439.6 1039.1,440.1 1039.6,438.8 1040.1,439.3 1040.7,439.3 1041.2,439.8 1041.8,440.0 1042.3,439.8 1042.8,440.0 1043.4,440.0 1043.9,440.8 1044.5,440.3 1045.0,440.2 1045.6,439.0 1046.1,439.0 1046.6,439.9 1047.2,440.5 1047.7,439.1 1048.3,439.2 1048.8,439.1 1049.3,439.3 1049.9,439.0 1050.4,438.8 1051.0,439.1 1051.5,439.4 1052.1,440.2 1052.6,439.1 1053.1,438.5 1053.7,439.6 1054.2,439.9 1054.8,439.5 1055.3,438.5 1055.8,439.8 1056.4,438.7 1056.9,440.0 1057.5,439.9 1058.0,439.5 1058.6,439.3 1059.1,440.0 1059.6,439.7 1060.2,438.1 1060.7,438.2 1061.3,437.1 1061.8,438.7 1062.3,439.8 1062.9,440.4 1063.4,438.8 1064.0,440.8 1064.5,441.5 1065.0,440.3 1065.6,438.2 1066.1,438.1 1066.7,439.7 1067.2,441.2 1067.8,439.8 1068.3,438.1 1068.8,438.0 1069.4,440.3 1069.9,439.8 1070.5,438.4 1071.0,437.3 1071.5,438.9 1072.1,439.8 1072.6,439.2 1073.2,439.1 1073.7,439.3 1074.3,439.1 1074.8,438.8 1075.3,438.7 1075.9,438.6 1076.4,440.0 1077.0,440.0 1077.5,440.5 1078.0,441.4 1078.6,438.4 1079.1,438.9 1079.7,439.9 1080.2,439.5 1080.8,438.9 1081.3,439.5 1081.8,439.0 1082.4,438.5 1082.9,438.8 1083.5,439.1 1084.0,439.3 1084.5,440.1 1085.1,439.7 1085.6,439.1 1086.2,441.8 1086.7,440.3 1087.3,439.6 1087.8,439.3 1088.3,438.8 1088.9,437.8 1089.4,438.8 1090.0,440.3 1090.5,438.3 1091.0,438.3 1091.6,439.2 1092.1,438.8 1092.7,439.5 1093.2,439.4 1093.8,438.5 1094.3,438.8 1094.8,438.7 1095.4,439.5 1095.9,437.4 1096.5,438.8 1097.0,440.2"/>
<path d="M632.500 438 V465 M633.500 438 V491 M735.500 437 V457 M736.500 437 V478 M762.500 437 V472 M761.500 437 V455" stroke="#cc33cc" stroke-width="1" fill="none"/>
<path d="M555.500 388 V515" stroke="#000" stroke-width="2" fill="none"/><path d="M555.500 515 V593" stroke="#e040e0" stroke-width="1.5" fill="none"/>
<text x="547" y="299" font-size="10.7" text-anchor="end">2500</text><text x="547" y="359" font-size="10.7" text-anchor="end">2000</text><text x="547" y="418" font-size="10.7" text-anchor="end">1500</text><text x="547" y="478" font-size="10.7" text-anchor="end">1000</text><text x="547" y="537" font-size="10.7" text-anchor="end">500</text><text x="547" y="597" font-size="10.7" text-anchor="end">0</text>
<text x="782" y="255" font-size="21.3" font-weight="bold" text-anchor="middle">0 to 1000</text>
<text transform="translate(559,638) rotate(-90)" font-size="10.7">Feature</text>
<rect x="460.500" y="425.500" width="48" height="38" fill="#fff" stroke="#000"/><rect x="464" y="435" width="24" height="1" fill="#000040"/><rect x="464" y="455" width="24" height="1" fill="#cc33cc"/><text x="491" y="439" font-size="10.7">on</text><text x="491" y="459" font-size="10.7">off</text>
</svg>
<div style="left:1346px;top:115px;width:17px;height:572px;background:#f7f7f7"></div>
<div style="left:1344px;top:115px;width:19px;height:6px;background:#f0f0f0"></div><div style="left:1346px;top:121.500px;width:17px;height:2px;background:#303030"></div><div class="vb" style="left:1346px;top:123px;width:16px;height:16px"></div><svg style="left:1346px;top:123px" width="16" height="16" viewBox="0 0 16 16"><path d="M5 10 L12 10 L8.500 6 Z" fill="#000"/></svg><div class="vb" style="left:1346px;top:139px;width:16px;height:8px"></div><div class="vb" style="left:1346px;top:672px;width:16px;height:15px"></div><svg style="left:1346px;top:672px" width="16" height="15" viewBox="0 0 16 15"><path d="M5 6 L12 6 L8.500 10 Z" fill="#000"/></svg>
<div style="left:0;top:687px;width:1363px;height:19px;background:#f0f0f0"></div>
<div style="left:0;top:687px;width:808px;height:1px;background:#8c8c8c"></div>
<svg style="left:0;top:688px" width="66" height="16" viewBox="0 0 66 16"><path d="M3 4 h1.500 v7 h-1.500 z M9.300 4 v7 l-4.300 -3.500 z M25.500 4 v7 l-4.300 -3.500 z M36.500 4 v7 l4.300 -3.500 z M52.500 4 v7 l4.300 -3.500 z M57.500 4 h1.500 v7 h-1.500 z" fill="#000"/><rect x="63" y="0" width="1" height="15" fill="#b0b0b0"/></svg>
<svg style="left:62px;top:687px" width="90" height="17" viewBox="0 0 90 17"><path d="M0 0 L87 0 L79 15.500 L9 15.500 Z" fill="#fff"/><path d="M1.500 0 L9.500 15.500 L78.500 15.500 L86.500 0" fill="none" stroke="#000" stroke-width="1"/></svg>
<div class="t" style="left:74px;top:690px;font-size:12px;font-weight:bold;font-family:'DejaVu Sans','Liberation Sans',sans-serif;letter-spacing:-.45px">20120808</div>
<div style="left:808px;top:687px;width:538px;height:16px;background:#f7f7f7"></div><div style="left:815px;top:687px;width:2px;height:16px;background:#101010"></div><div class="vb" style="left:817px;top:687px;width:16px;height:16px"></div><svg style="left:817px;top:687px" width="16" height="16" viewBox="0 0 16 16"><path d="M8.500 4.500 v7.500 l-4.500 -3.750 z" fill="#000"/></svg><div class="vb" style="left:833px;top:687px;width:451px;height:16px"></div><div class="vb" style="left:1323px;top:687px;width:16px;height:16px"></div><svg style="left:1323px;top:687px" width="16" height="16" viewBox="0 0 16 16"><path d="M6 4.500 v7.500 l4.500 -3.750 z" fill="#000"/></svg><div style="left:1339px;top:687px;width:6px;height:16px;background:#f0f0f0;border-bottom:1px solid #a0a0a0"></div><div style="left:1345px;top:687px;width:18px;height:16px;background:#f0f0f0;border-left:2px solid #202020;border-top:2px solid #686868"></div>
</body></html>
